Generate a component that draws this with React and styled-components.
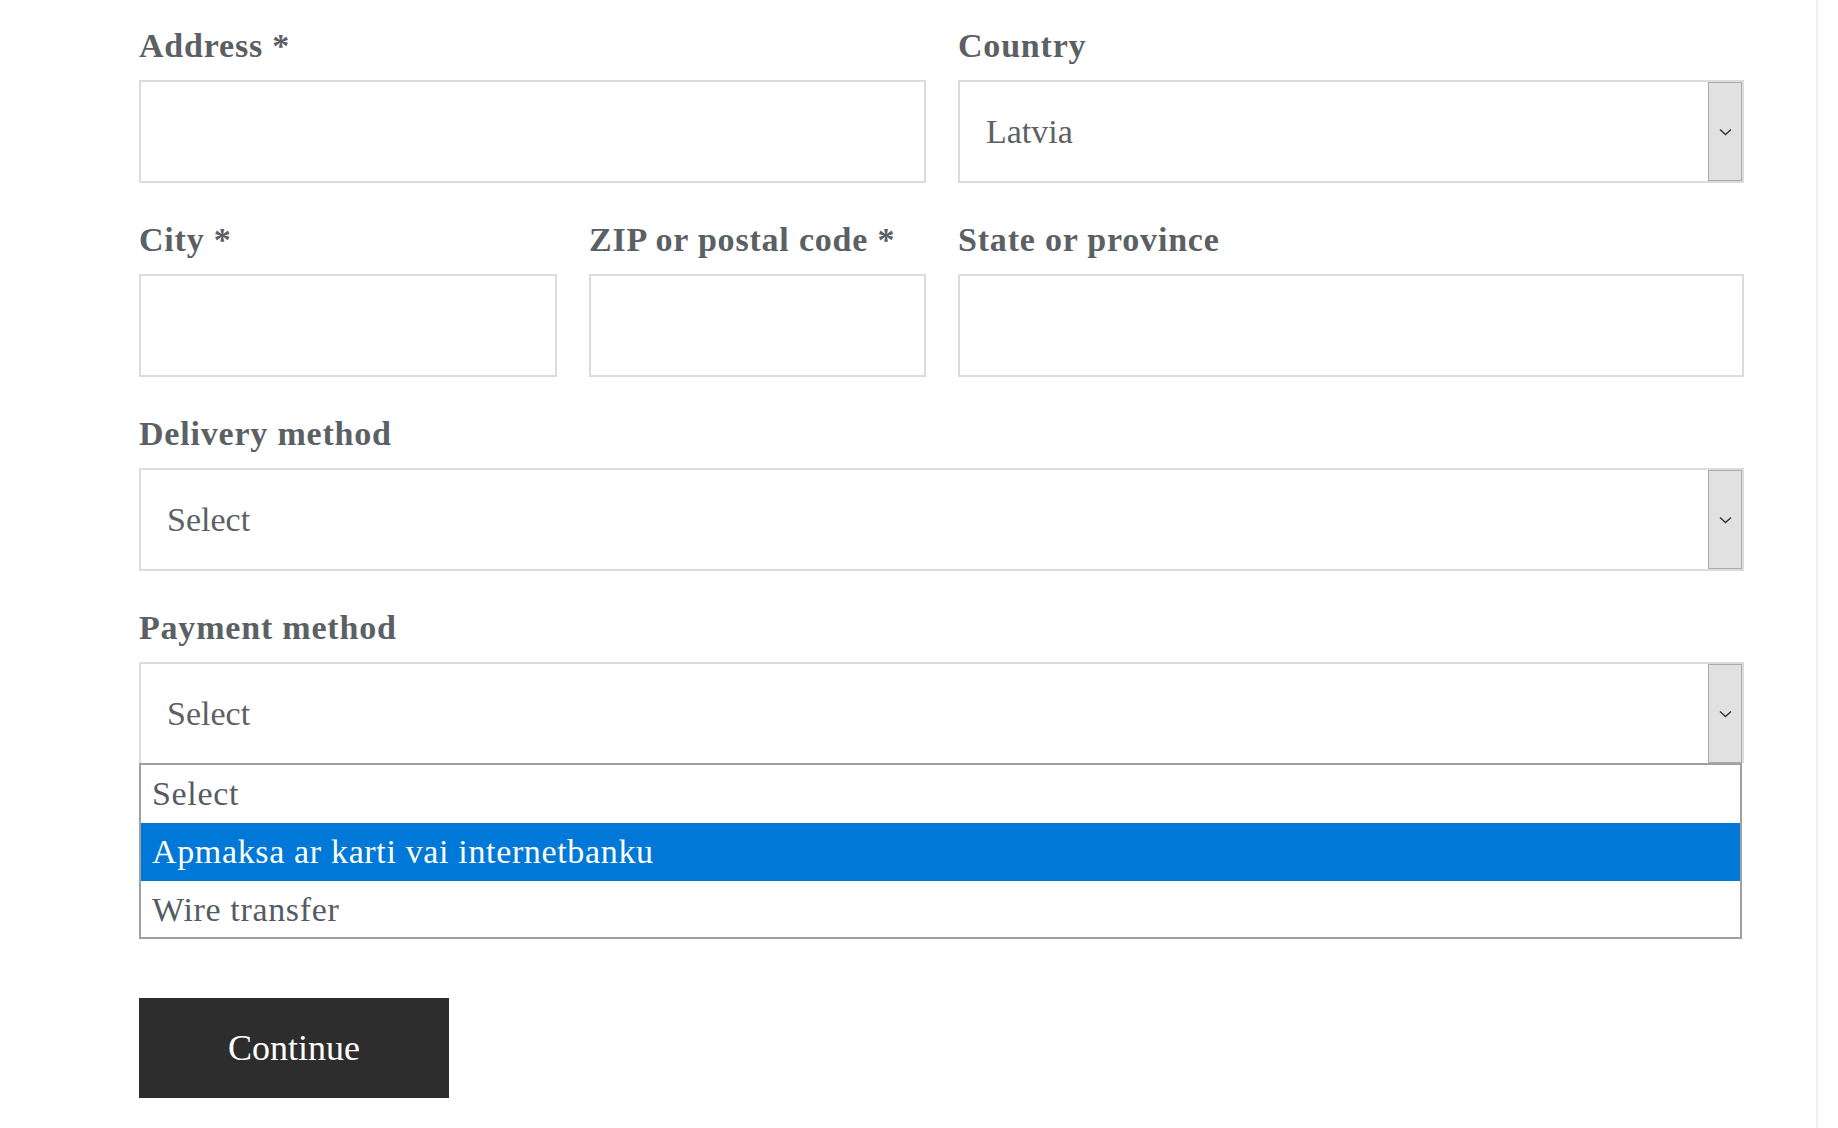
import styled, { createGlobalStyle } from "styled-components";

const GlobalStyle = createGlobalStyle`
  html, body {
    margin: 0;
    padding: 0;
    background: #fff;
  }
  * {
    box-sizing: border-box;
  }
`;

const Page = styled.div`
  width: 1818px;
  min-height: 1128px;
  border-right: 2px solid #efefef;
  padding: 22px 0 0 139px;
`;

const Form = styled.form`
  width: 1605px;
  display: grid;
  grid-template-columns: 418px 337px 786px;
  column-gap: 32px;
  row-gap: 33px;
`;

const Field = styled.div`
  display: flex;
  flex-direction: column;
  grid-column: ${(p) => p.$span || "auto"};
`;

const Label = styled.label`
  font-family: "Liberation Serif", "Times New Roman", serif;
  font-weight: 700;
  font-size: 34px;
  letter-spacing: 0.8px;
  line-height: 46px;
  color: #5b6065;
  padding-top: 1px;
  margin-bottom: 11px;
`;

const TextInput = styled.input`
  height: 103px;
  width: 100%;
  border: 2px solid #dcdcdc;
  background: #fff;
  outline: none;
  padding: 0 28px;
  font-family: "Liberation Serif", serif;
  font-size: 34px;
  color: #5b6065;
`;

const SelectBox = styled.div`
  position: relative;
  height: ${(p) => (p.$open ? "101px" : "103px")};
  border: 2px solid #dcdcdc;
  border-bottom: ${(p) => (p.$open ? "none" : "2px solid #dcdcdc")};
  display: flex;
  align-items: center;
  padding: 0 0 0 26px;
  font-family: "Liberation Serif", serif;
  font-size: 34px;
  color: #5c6166;
`;

const ArrowButton = styled.span`
  position: absolute;
  top: 0;
  right: 0;
  bottom: 0;
  width: 34px;
  background: #e1e1e1;
  border: 1px solid #ababab;
  display: flex;
  align-items: center;
  justify-content: center;
`;

const OptionList = styled.ul`
  list-style: none;
  margin: 0;
  padding: 0;
  width: 1603px;
  border: 2px solid #a0a0a0;
  background: #fff;
`;

const Option = styled.li`
  height: ${(p) => (p.$last ? "56px" : "58px")};
  line-height: 58px;
  padding-left: 11px;
  font-family: "Liberation Serif", serif;
  font-size: 34px;
  letter-spacing: 0.65px;
  color: ${(p) => (p.$active ? "#fff" : "#555b62")};
  background: ${(p) => (p.$active ? "#0078d7" : "transparent")};
`;

const Actions = styled.div`
  grid-column: 1 / -1;
  margin-top: 26px;
`;

const ContinueButton = styled.button`
  width: 310px;
  height: 100px;
  border: none;
  background: #2d2d2d;
  color: #fff;
  font-family: "Liberation Serif", serif;
  font-size: 36px;
  cursor: pointer;
`;

function Chevron() {
  return (
    <svg width="13" height="8" viewBox="0 0 13 8">
      <path d="M1 1.5 L6.5 6.5 L12 1.5" fill="none" stroke="#333" strokeWidth="1.4" />
    </svg>
  );
}

function Select({ value, open }) {
  return (
    <SelectBox $open={open}>
      {value}
      <ArrowButton>
        <Chevron />
      </ArrowButton>
    </SelectBox>
  );
}

const paymentOptions = ["Select", "Apmaksa ar karti vai internetbanku", "Wire transfer"];

export default function App() {
  return (
    <>
      <GlobalStyle />
      <Page>
        <Form onSubmit={(e) => e.preventDefault()}>
          <Field $span="1 / 3">
            <Label>Address *</Label>
            <TextInput />
          </Field>
          <Field>
            <Label>Country</Label>
            <Select value="Latvia" />
          </Field>

          <Field>
            <Label>City *</Label>
            <TextInput />
          </Field>
          <Field>
            <Label>ZIP or postal code *</Label>
            <TextInput />
          </Field>
          <Field>
            <Label>State or province</Label>
            <TextInput />
          </Field>

          <Field $span="1 / -1">
            <Label>Delivery method</Label>
            <Select value="Select" />
          </Field>

          <Field $span="1 / -1">
            <Label>Payment method</Label>
            <Select value="Select" open />
            <OptionList>
              {paymentOptions.map((opt, i) => (
                <Option key={opt} $active={i === 1} $last={i === paymentOptions.length - 1}>
                  {opt}
                </Option>
              ))}
            </OptionList>
          </Field>

          <Actions>
            <ContinueButton type="submit">Continue</ContinueButton>
          </Actions>
        </Form>
      </Page>
    </>
  );
}
